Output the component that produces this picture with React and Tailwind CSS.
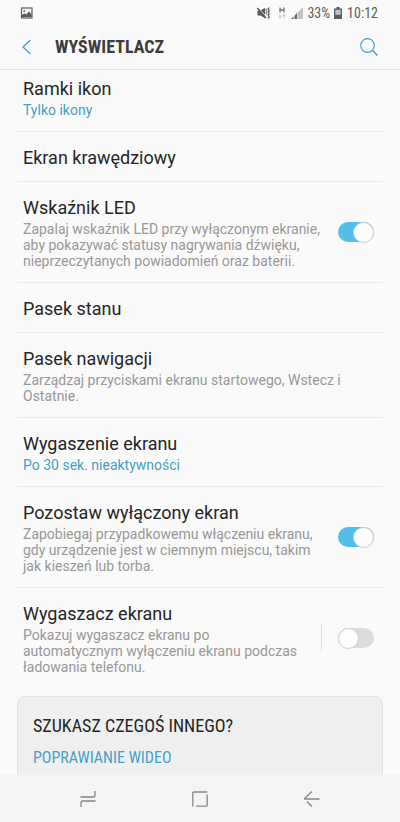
import React, { useState } from 'react'

const settings = [
  { id: 'frames', title: 'Ramki ikon', value: 'Tylko ikony' },
  { id: 'edge', title: 'Ekran krawędziowy' },
  {
    id: 'led',
    title: 'Wskaźnik LED',
    description:
      'Zapalaj wskaźnik LED przy wyłączonym ekranie, aby pokazywać statusy nagrywania dźwięku, nieprzeczytanych powiadomień oraz baterii.',
    toggle: true,
    on: true
  },
  { id: 'status', title: 'Pasek stanu' },
  {
    id: 'navigation',
    title: 'Pasek nawigacji',
    description: 'Zarządzaj przyciskami ekranu startowego, Wstecz i Ostatnie.'
  },
  { id: 'timeout', title: 'Wygaszenie ekranu', value: 'Po 30 sek. nieaktywności' },
  {
    id: 'keepOff',
    title: 'Pozostaw wyłączony ekran',
    description:
      'Zapobiegaj przypadkowemu włączeniu ekranu, gdy urządzenie jest w ciemnym miejscu, takim jak kieszeń lub torba.',
    toggle: true,
    on: true
  },
  {
    id: 'screensaver',
    title: 'Wygaszacz ekranu',
    description:
      'Pokazuj wygaszacz ekranu po automatycznym wyłączeniu ekranu podczas ładowania telefonu.',
    toggle: true,
    split: true,
    on: false
  }
]

function StatusBar() {
  return (
    <div className="flex h-[25px] items-center justify-between pl-5 pr-[22px] text-[#5c5c5c]">
      <svg width="13" height="12" viewBox="0 0 13 12">
        <rect x="1.5" y="1" width="10.5" height="10" fill="none" stroke="currentColor" strokeWidth="1.2" />
        <path d="M2 10V8l2.2-1.8 2 1.2L9 4.6l2.500 2.600V10z" fill="currentColor" />
        <circle cx="4.200" cy="3.900" r="0.900" fill="currentColor" />
      </svg>

      <div className="flex items-center font-['Roboto_Condensed','Roboto',sans-serif] text-sm">
        {/* muted + vibrate */}
        <svg width="13" height="12" viewBox="0 0 13 12" className="mr-2">
          <path d="M.5 3.500h3L8 .8v10.400L3.500 8.500h-3z" fill="currentColor" />
          <path d="M1.200.4l8 9.400" stroke="#fafafa" strokeWidth="1" />
          <path d="M.3 1l8.600 10" stroke="currentColor" strokeWidth="1.500" />
          <path d="M9.800 1.500l-1 1.500 1 1.500-1 1.500 1 1.500" stroke="currentColor" fill="none" />
          <path d="M12.200.5l-1 1.600 1 1.600-1 1.600 1 1.600-1 1.600 1 1.600-1 1.400" stroke="currentColor" strokeWidth="1.300" fill="none" />
        </svg>
        {/* HSPA data */}
        <svg width="8" height="12" viewBox="0 0 8 12" className="mr-[5px]" fill="none">
          <path d="M2 .5v5M6 .5v5M2 3h4" stroke="#777" strokeWidth="1.300" />
          <path d="M2 7.500v3.500M.7 9.700L2 11l1.300-1.300M6 11.200V7.700M4.700 9L6 7.700 7.300 9" stroke="#bdbdbd" />
        </svg>
        <svg width="12" height="12" viewBox="0 0 12 12" className="mr-1">
          <path d="M0 12L6 6v6z" fill="#6b6b6b" />
          <path d="M3 8v4" stroke="#fafafa" strokeWidth="1" />
          <path d="M6.500 5.500L12 0v12H6.500z" fill="#c4c4c4" />
        </svg>
        <span className="mr-1">33%</span>
        <svg width="8" height="12" viewBox="0 0 8 12" className="mr-[5px]">
          <path d="M2.500 0h3v1.500H8V12H0V1.500h2.500z" fill="currentColor" />
          <path d="M1.300 2.800h5.400v5H1.300z" fill="#c0c0c0" />
        </svg>
        <span>10:12</span>
      </div>
    </div>
  )
}

function Toggle({ id, checked, onChange, label }) {
  return (
    <input
      id={id}
      type="checkbox"
      role="switch"
      aria-label={label}
      checked={checked}
      onChange={onChange}
      className="flex h-5 w-9 shrink-0 appearance-none items-center justify-start rounded-full bg-[#dcdcdc] before:size-[21px] before:shrink-0 before:rounded-full before:border before:border-[#cfcfcf] before:bg-[#fdfdfd] before:content-[''] checked:justify-end checked:bg-[#54bfe6]"
    />
  )
}

function SettingText({ item }) {
  return (
    <>
      <span className="block text-lg leading-[25px] text-[#252525]">{item.title}</span>
      {item.value && (
        <span className="mt-px block pb-0.5 text-sm leading-4 text-[#46a0c4]">{item.value}</span>
      )}
      {item.description && (
        <span className="mt-px block pb-0.5 text-sm leading-4 text-[#989898]">{item.description}</span>
      )}
    </>
  )
}

function SettingRow({ item, checked, onToggle }) {
  if (!item.toggle) {
    return (
      <button type="button" className="block w-full px-1.5 pb-[11px] pt-[13px] text-left">
        <SettingText item={item} />
      </button>
    )
  }

  return (
    <div className="flex items-center pl-1.5 pr-[9px]">
      <label htmlFor={item.id} className="flex-1 pb-[11px] pr-4 pt-[13px]">
        <SettingText item={item} />
      </label>
      {item.split && <span className="mr-4 h-7 w-px bg-[#e2e2e2]" />}
      <Toggle id={item.id} label={item.title} checked={checked} onChange={onToggle} />
    </div>
  )
}

export default function App() {
  const [enabled, setEnabled] = useState(
    Object.fromEntries(settings.filter(s => s.toggle).map(s => [s.id, s.on]))
  )

  const toggle = (id) => {
    setEnabled(prev => ({ ...prev, [id]: !prev[id] }))
  }

  return (
    <div className="flex h-screen flex-col bg-[#fafafa] font-['Roboto',sans-serif]">
      <header className="shrink-0 border-b border-[#e6e6e6]">
        <StatusBar />
        <div className="flex h-11 items-center pl-5 pr-[22px]">
          <button type="button" aria-label="Wstecz" className="mr-[22px] text-[#46a0c4]">
            <svg width="13" height="16" viewBox="0 0 13 16" fill="none" stroke="currentColor" strokeWidth="1.400">
              <path d="M10.500 1L3 8l7.500 7" />
            </svg>
          </button>
          <h1 className="flex-1 font-['Roboto_Condensed','Roboto',sans-serif] text-lg font-bold text-[#3c3c3c]">
            WYŚWIETLACZ
          </h1>
          <button type="button" aria-label="Szukaj" className="text-[#46a0c4]">
            <svg width="18" height="18" viewBox="0 0 18 18" fill="none" stroke="currentColor" strokeWidth="1.200">
              <circle cx="7.500" cy="7.500" r="6.800" />
              <path d="M12.300 12.300l5.200 5.200" strokeWidth="1.500" />
            </svg>
          </button>
        </div>
      </header>

      <main className="min-h-0 flex-1 overflow-hidden px-[17px]">
        {/* list is scrolled slightly under the header */}
        <ul className="-mt-[7px] divide-y divide-[#e9e9e9]">
          {settings.map(item => (
            <li key={item.id}>
              <SettingRow item={item} checked={enabled[item.id]} onToggle={() => toggle(item.id)} />
            </li>
          ))}
        </ul>

        <section className="mt-2 rounded-lg border border-[#e4e4e4] bg-[#efefef] px-[15px] pb-6 pt-4 font-['Roboto_Condensed','Roboto',sans-serif]">
          <h2 className="text-lg leading-[25px] text-[#252525]">SZUKASZ CZEGOŚ INNEGO?</h2>
          <a href="#wideo" className="mt-2 block text-base leading-6 text-[#46a0c4]">
            POPRAWIANIE WIDEO
          </a>
        </section>
      </main>

      <nav className="flex h-[47px] shrink-0 items-center justify-between bg-[#f4f4f4] px-20 text-[#858585]">
        <button type="button" aria-label="Ostatnie">
          <svg width="16" height="18" viewBox="0 0 16 18" fill="none" stroke="currentColor" strokeWidth="1.300">
            <path d="M.5 7H13.500q1.500 0 1.500-1.500V1M15.500 11H2.500Q1 11 1 12.500V17" />
          </svg>
        </button>
        <button type="button" aria-label="Ekran startowy">
          <svg width="16" height="16" viewBox="0 0 16 16" fill="none" stroke="currentColor" strokeWidth="1.300">
            <path d="M15.300 1H2Q.8 1 .8 2.200V15.500M4 15.200h10q1.200 0 1.200-1.200V3.500" />
          </svg>
        </button>
        <button type="button" aria-label="Wstecz do poprzedniego ekranu">
          <svg width="16" height="16" viewBox="0 0 16 16" fill="none" stroke="currentColor" strokeWidth="1.300">
            <path d="M8 .5L.8 7.200V8H15.500M2.800 10.500L8 15.500" />
          </svg>
        </button>
      </nav>
    </div>
  )
}
